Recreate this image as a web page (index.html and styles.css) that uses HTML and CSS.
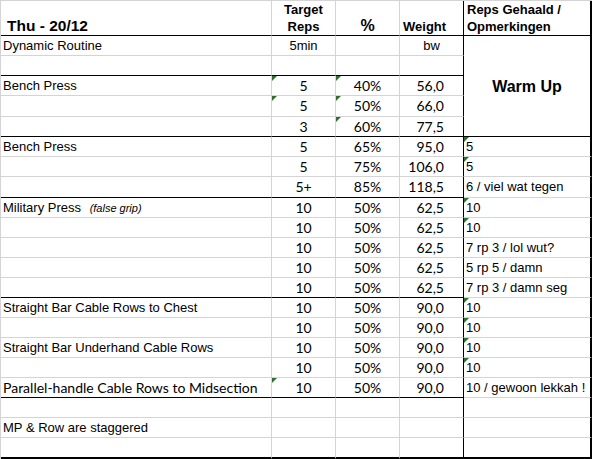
FILE: index.html
```html
<!DOCTYPE html>
<html>
<head>
<meta charset="utf-8">
<link rel="stylesheet" href="styles.css">
</head>
<body>
<div class="sheet">
  <div class="c a hd title">Thu - 20/12</div>
  <div class="c b hd ctr">Target<br>Reps</div>
  <div class="c p hd ctr pct">%</div>
  <div class="c d hd wt">Weight</div>
  <div class="c e hd">Reps Gehaald /<br>Opmerkingen</div>

  <div class="c e warm">Warm Up</div>

  <div class="c a">Dynamic Routine</div>
  <div class="c b ctr">5min</div>
  <div class="c p"></div>
  <div class="c d ctr">bw</div>

  <div class="c a sep"></div>
  <div class="c b sep"></div>
  <div class="c p sep"></div>
  <div class="c d sep"></div>

  <div class="c a">Bench Press</div>
  <div class="c b ctr cal tri">5</div>
  <div class="c p ctr cal tri">40%</div>
  <div class="c d num cal">56,0</div>

  <div class="c a"></div>
  <div class="c b ctr cal tri">5</div>
  <div class="c p ctr cal tri">50%</div>
  <div class="c d num cal">66,0</div>

  <div class="c a sep"></div>
  <div class="c b ctr cal sep">3</div>
  <div class="c p ctr cal tri sep">60%</div>
  <div class="c d num cal sep">77,5</div>

  <div class="c a">Bench Press</div>
  <div class="c b ctr cal">5</div>
  <div class="c p ctr cal">65%</div>
  <div class="c d num cal">95,0</div>
  <div class="c e tri">5</div>

  <div class="c a"></div>
  <div class="c b ctr cal">5</div>
  <div class="c p ctr cal">75%</div>
  <div class="c d num cal">106,0</div>
  <div class="c e tri">5</div>

  <div class="c a sep"></div>
  <div class="c b ctr cal sep">5+</div>
  <div class="c p ctr cal sep">85%</div>
  <div class="c d num cal sep">118,5</div>
  <div class="c e">6 / viel wat tegen</div>

  <div class="c a">Military Press <span class="note">(false grip)</span></div>
  <div class="c b ctr cal">10</div>
  <div class="c p ctr cal">50%</div>
  <div class="c d num cal">62,5</div>
  <div class="c e tri">10</div>

  <div class="c a"></div>
  <div class="c b ctr cal">10</div>
  <div class="c p ctr cal">50%</div>
  <div class="c d num cal">62,5</div>
  <div class="c e tri">10</div>

  <div class="c a"></div>
  <div class="c b ctr cal">10</div>
  <div class="c p ctr cal">50%</div>
  <div class="c d num cal">62,5</div>
  <div class="c e">7 rp 3 / lol wut?</div>

  <div class="c a"></div>
  <div class="c b ctr cal">10</div>
  <div class="c p ctr cal">50%</div>
  <div class="c d num cal">62,5</div>
  <div class="c e">5 rp 5 / damn</div>

  <div class="c a sep"></div>
  <div class="c b ctr cal sep">10</div>
  <div class="c p ctr cal sep">50%</div>
  <div class="c d num cal sep">62,5</div>
  <div class="c e">7 rp 3 / damn seg</div>

  <div class="c a">Straight Bar Cable Rows to Chest</div>
  <div class="c b ctr cal">10</div>
  <div class="c p ctr cal">50%</div>
  <div class="c d num cal">90,0</div>
  <div class="c e tri">10</div>

  <div class="c a"></div>
  <div class="c b ctr cal">10</div>
  <div class="c p ctr cal">50%</div>
  <div class="c d num cal">90,0</div>
  <div class="c e tri">10</div>

  <div class="c a">Straight Bar Underhand Cable Rows</div>
  <div class="c b ctr cal">10</div>
  <div class="c p ctr cal">50%</div>
  <div class="c d num cal">90,0</div>
  <div class="c e tri">10</div>

  <div class="c a"></div>
  <div class="c b ctr cal">10</div>
  <div class="c p ctr cal">50%</div>
  <div class="c d num cal">90,0</div>
  <div class="c e tri">10</div>

  <div class="c a cal sep">Parallel-handle Cable Rows to Midsection</div>
  <div class="c b ctr cal tri sep">10</div>
  <div class="c p ctr cal sep">50%</div>
  <div class="c d num cal sep">90,0</div>
  <div class="c e">10 / gewoon lekkah !</div>

  <div class="c a"></div>
  <div class="c b"></div>
  <div class="c p"></div>
  <div class="c d"></div>
  <div class="c e"></div>

  <div class="c a">MP &amp; Row are staggered</div>
  <div class="c b"></div>
  <div class="c p"></div>
  <div class="c d"></div>
  <div class="c e"></div>

  <div class="c a last"></div>
  <div class="c b last"></div>
  <div class="c p last"></div>
  <div class="c d last"></div>
  <div class="c e last"></div>
</div>
</body>
</html>
```

FILE: styles.css
```css
html, body {
  margin: 0;
  padding: 0;
  background: #ffffff;
}

.sheet {
  width: 592px;
  display: grid;
  grid-template-columns: 271px 64px 64px 64px 128px;
  grid-template-rows: 35px 20px 20px 20px 21px 20px 20px 20px 21px repeat(12, 20px) 21px;
  border-top: 1px solid #d4d4d4;
  border-left: 1px solid #d4d4d4;
  box-sizing: border-box;
  font-family: "Liberation Sans", Arial, sans-serif;
  font-size: 13px;
  color: #000;
}

.c {
  position: relative;
  box-sizing: border-box;
  border-right: 1px solid #d4d4d4;
  border-bottom: 1px solid #d4d4d4;
  line-height: 19px;
  white-space: nowrap;
  overflow: visible;
}

.a { padding-left: 2px; }
.e { padding-left: 2px; }

.d { border-right-color: #000; }
.e { border-right: 2px solid #000; }

.sep { border-bottom-color: #000; }
.last { border-bottom: 2px solid #000; }

.ctr { text-align: center; }
.num { text-align: right; padding-right: 19px; }

.cal {
  font-family: Lato, "Liberation Sans", sans-serif;
  font-size: 14px;
  line-height: 17px;
  padding-top: 1px;
}

.note {
  font-style: italic;
  font-size: 11px;
  margin-left: 5px;
}

.hd {
  display: flex;
  flex-direction: column;
  justify-content: flex-end;
  font-weight: bold;
  line-height: 17px;
  padding-bottom: 0;
  border-bottom-color: #000;
}

.hd.ctr { align-items: center; }
.hd.e { padding-left: 3px; }

.title {
  font-size: 15.5px;
  padding-left: 6px;
  padding-bottom: 1px;
}

.pct {
  font-size: 16px;
  padding-bottom: 1px;
}

.wt { padding-left: 3px; }

.warm {
  grid-column: 5;
  grid-row: 2 / span 5;
  display: flex;
  align-items: center;
  justify-content: center;
  padding-left: 0;
  font-weight: bold;
  font-size: 16px;
  border-bottom-color: #000;
}

.tri::before {
  content: "";
  position: absolute;
  top: 0;
  left: 0;
  width: 0;
  height: 0;
  border-top: 5px solid #2f6f2f;
  border-right: 5px solid transparent;
}
```
